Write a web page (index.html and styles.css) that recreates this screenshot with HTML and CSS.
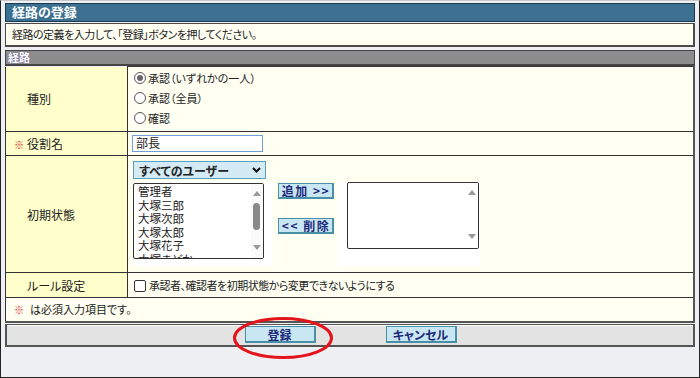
FILE: index.html
```html
<!DOCTYPE html>
<html lang="ja">

<head>
  <meta charset="UTF-8">
  <title>経路の登録</title>
  <link rel="stylesheet" href="styles.css">
</head>

<body>
  <div class="frame">
    <div class="title-bar">経路の登録</div>
    <div class="guide">経路の定義を入力して、「登録」ボタンを押してください。</div>
    <div class="section-head">経路</div>
    <table class="form">
      <tr class="row-kind">
        <th>種別</th>
        <td class="kinds">
          <label class="radio"><span class="dot on"></span>承認（いずれかの一人）</label>
          <label class="radio"><span class="dot"></span>承認（全員）</label>
          <label class="radio"><span class="dot"></span>確認</label>
        </td>
      </tr>
      <tr class="row-role">
        <th><span class="req">※</span>役割名</th>
        <td class="role"><div class="text-input">部長</div></td>
      </tr>
      <tr class="row-init">
        <th>初期状態</th>
        <td class="init">
          <div class="select">すべてのユーザー
            <svg class="chev" width="9" height="6" viewBox="0 0 9 6"><path d="M1 1 L4.5 4.5 L8 1" fill="none" stroke="#111" stroke-width="2"/></svg>
          </div>
          <div class="picker">
            <div class="pane">
              <div class="list">
                <div class="options">
                  <div>管理者</div>
                  <div>大塚三郎</div>
                  <div>大塚次郎</div>
                  <div>大塚太郎</div>
                  <div>大塚花子</div>
                  <div>大塚まどか</div>
                </div>
                <div class="sb">
                  <span class="up"></span>
                  <span class="thumb"></span>
                  <span class="down"></span>
                </div>
              </div>
            </div>
            <div class="moves">
              <button class="btn small">追加 &gt;&gt;</button>
              <button class="btn small">&lt;&lt; 削除</button>
            </div>
            <div class="pane pane-right">
              <div class="list list-right">
                <div class="options"></div>
                <div class="sb">
                  <span class="up"></span>
                  <span class="down"></span>
                </div>
              </div>
            </div>
          </div>
        </td>
      </tr>
      <tr class="row-rule">
        <th>ルール設定</th>
        <td class="rule"><span class="box"></span>承認者、確認者を初期状態から変更できないようにする</td>
      </tr>
      <tr class="row-note">
        <td colspan="2" class="note"><span class="req">※</span>は必須入力項目です。</td>
      </tr>
    </table>
    <div class="actions">
      <button class="btn">登録</button>
      <button class="btn">キャンセル</button>
      <!-- 赤丸の注記 -->
      <svg class="mark" width="102" height="44" viewBox="0 0 102 44">
        <ellipse cx="51" cy="22" rx="48.5" ry="19.5" fill="none" stroke="#e3141b" stroke-width="3"/>
      </svg>
    </div>
  </div>
</body>

</html>
```

FILE: styles.css
```css
* {
  box-sizing: border-box;
}

body {
  margin: 0;
  font-family: "Noto Sans CJK JP", sans-serif;
  font-size: 11px;
  color: #222;
  font-feature-settings: "palt";
}

.frame {
  width: 700px;
  height: 378px;
  border: 1px solid #222;
  border-top-color: #c8c8c8;
  background: #eef0f3;
  padding: 2px 4px 0 4px;
}

.title-bar {
  height: 19px;
  background: #3c7090;
  border: 1px solid #1b3b52;
  color: #fff;
  font-weight: bold;
  font-size: 13px;
  line-height: 16px;
  padding-left: 6px;
}

.guide {
  margin-top: 1px;
  height: 24px;
  background: #fffff2;
  border: 1px solid #4a4a4a;
  border-right-width: 2px;
  border-bottom-width: 2px;
  line-height: 20px;
  padding-left: 6px;
  letter-spacing: -0.5px;
}

.section-head {
  margin-top: 3px;
  height: 16px;
  background: #8d8d8d;
  border: 1px solid #444;
  border-bottom-width: 2px;
  color: #fff;
  font-weight: bold;
  font-size: 11px;
  line-height: 12px;
  padding-left: 2px;
  text-shadow: 0 0 1px #6a4fb0;
}

.form {
  width: 690px;
  border-collapse: collapse;
  border-left: 1px solid #333;
  border-right: 2px solid #555;
  border-bottom: 2px solid #555;
}

.form th,
.form td {
  border-top: 1px solid #333;
  padding: 0;
}

.form th {
  width: 122px;
  background: #ffffcc;
  border-right: 1px solid #333;
  font-weight: normal;
  font-size: 12px;
  text-align: left;
  padding-left: 21px;
  vertical-align: middle;
}

.form td {
  background: #fffff2;
}

.row-kind th {
  border-top: none;
}

.row-kind {
  height: 65px;
}

.row-role {
  height: 24px;
}

.row-init {
  height: 117px;
}

.row-rule {
  height: 25px;
}

.row-note {
  height: 24px;
}

.req {
  color: #e01818;
  font-size: 10px;
  display: inline-block;
  width: 13px;
  margin-left: -13px;
}

.kinds {
  padding: 1px 0 3px 6px !important;
}

.radio {
  display: flex;
  align-items: center;
  height: 20px;
}

.dot {
  width: 12px;
  height: 12px;
  border: 1px solid #555;
  border-radius: 50%;
  background: #fff;
  margin-right: 2px;
  display: flex;
  align-items: center;
  justify-content: center;
}

.dot.on::after {
  content: "";
  width: 6px;
  height: 6px;
  border-radius: 50%;
  background: #666;
}

.role {
  padding-left: 4px !important;
}

.text-input {
  width: 131px;
  height: 17px;
  border: 1px solid #6f9fd6;
  background: #fff;
  font-size: 12px;
  line-height: 14px;
  padding-left: 3px;
}

.init {
  vertical-align: top;
  padding: 5px 0 0 5px !important;
}

.select {
  width: 133px;
  height: 18px;
  background: #d4eaf5;
  border: 1px solid #5a9fc0;
  font-size: 12px;
  font-weight: bold;
  line-height: 15px;
  padding-left: 5px;
  display: flex;
  align-items: center;
  justify-content: space-between;
  padding-right: 4px;
}

.picker {
  display: flex;
  margin-top: 3px;
}

.pane {
  width: 140px;
  height: 84px;
  background: #fff;
  padding-top: 1px;
}

.list {
  width: 131px;
  height: 76px;
  border: 1px solid #333;
  border-radius: 2px;
  background: #fff;
  display: flex;
  overflow: hidden;
}

.options {
  flex: 1;
  font-size: 11.5px;
  line-height: 13.6px;
  padding: 1px 0 0 4px;
  overflow: hidden;
}

.options div {
  height: 13.6px;
}

.sb {
  width: 12px;
  position: relative;
  background: #fafafa;
}

.sb .up,
.sb .down {
  position: absolute;
  left: 2px;
  width: 0;
  height: 0;
  border-left: 4px solid transparent;
  border-right: 4px solid transparent;
}

.sb .up {
  top: 7px;
  border-bottom: 5px solid #999;
}

.sb .down {
  bottom: 8px;
  border-top: 5px solid #999;
}

.sb .thumb {
  position: absolute;
  left: 2px;
  top: 19px;
  width: 7px;
  height: 27px;
  border-radius: 4px;
  background: #8a8a8a;
}

.moves {
  width: 64px;
  padding: 1px 0 0 5px;
  display: flex;
  flex-direction: column;
  align-items: flex-start;
  gap: 19px;
}

.pane-right {
  width: 143px;
  padding: 0 0 0 10px;
}

.list-right {
  width: 132px;
  height: 67px;
}

.list-right .sb {
  background: #fff;
}

.list-right .sb .down {
  bottom: 9px;
}

.btn {
  font-family: "Noto Sans CJK JP", sans-serif;
  font-feature-settings: "palt";
  font-size: 12px;
  font-weight: bold;
  color: #1d2a7a;
  background: #c9e7f3;
  border: 1px solid #4a8fa8;
  border-right-width: 2px;
  border-bottom-width: 2px;
  width: 71px;
  height: 17px;
  padding: 0;
  line-height: 13px;
}

.btn.small {
  width: 56px;
  height: 16px;
  line-height: 12px;
  text-align: center;
  letter-spacing: 1.5px;
  padding: 0 0 0 1px;
}

.rule {
  padding-left: 6px !important;
  letter-spacing: -0.5px;
}

.box {
  display: inline-block;
  vertical-align: -2px;
  width: 12px;
  height: 12px;
  border: 1px solid #333;
  border-radius: 2px;
  background: #fff;
  margin-right: 3px;
}

.note {
  padding-left: 8px !important;
}

.note .req {
  margin-left: 0;
  width: 16px;
}

.actions {
  position: relative;
  margin-top: 1px;
  height: 23px;
  background: #e3e3e3;
  border: 2px solid #555;
  border-top-width: 1px;
  box-shadow: inset 0 1px #fff;
  display: flex;
  justify-content: center;
  align-items: center;
  gap: 70px;
  padding-left: 1px;
}

.mark {
  position: absolute;
  left: 225px;
  top: -9px;
}
```
